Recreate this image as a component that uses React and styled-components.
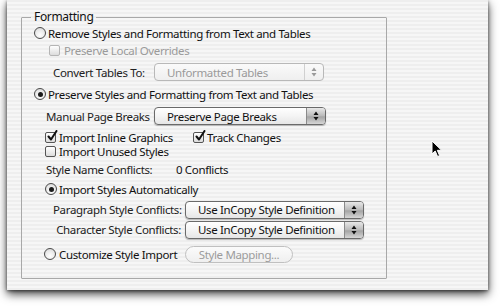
import React from "react"
import styled, { createGlobalStyle } from "styled-components"

const GlobalStyle = createGlobalStyle`
  html, body {
    margin: 0;
    padding: 0;
    background: #ffffff;
    overflow: hidden;
  }
  body {
    font-family: "Noto Sans", "DejaVu Sans", "Liberation Sans", sans-serif;
    font-size: 11.5px;
    letter-spacing: -0.35px;
    color: #111;
  }
`

const Stage = styled.div`
  position: relative;
  width: 500px;
  height: 306px;
  overflow: hidden;
`

const Window = styled.div`
  margin-left: 7px;
  width: 481px;
  height: 290px;
  padding: 10px 0 0 14px;
  box-sizing: border-box;
  background: repeating-linear-gradient(
    to bottom,
    #eeeeee 0px,
    #eeeeee 2px,
    #f6f6f6 2px,
    #f6f6f6 4px
  );
  box-shadow: 0 4px 9px rgba(0, 0, 0, 0.75), 0 1px 3px rgba(0, 0, 0, 0.5);
`

const Group = styled.fieldset`
  margin: 0;
  width: 366px;
  height: 269px;
  box-sizing: border-box;
  padding: 0 0 0 12px;
  border: 1px solid #a8a8a8;
  border-radius: 1px;
  min-width: 0;
`

const Legend = styled.legend`
  margin-left: -3px;
  padding: 0 3px;
  height: 14px;
  line-height: 14px;
  font-size: 12px;
`

const Row = styled.div`
  display: flex;
  align-items: center;
  height: ${p => p.$h || 16}px;
  margin-top: ${p => p.$mt || 0}px;
  padding-left: ${p => p.$indent || 0}px;
  white-space: nowrap;
`

const Item = styled.span`
  display: flex;
  align-items: center;
  width: ${p => (p.$w ? `${p.$w}px` : "auto")};
`

const Text = styled.span`
  color: ${p => (p.$disabled ? "#9a9a9a" : "#111")};
  margin-left: ${p => p.$ml || 0}px;
`

const Label = styled.span`
  display: inline-block;
  width: ${p => p.$w}px;
  text-align: ${p => p.$align || "left"};
  color: #222;
`

const RadioCircle = styled.span`
  display: inline-flex;
  align-items: center;
  justify-content: center;
  width: 12px;
  height: 12px;
  box-sizing: border-box;
  border-radius: 50%;
  border: 1px solid #4a4a4a;
  background: radial-gradient(circle at 50% 70%, #ffffff 0%, #e8e8e8 60%, #cfcfcf 100%);
  flex-shrink: 0;

  &::after {
    content: "";
    width: 5px;
    height: 5px;
    border-radius: 50%;
    background: #1a1a1a;
    display: ${p => (p.$on ? "block" : "none")};
  }
`

const Box = styled.span`
  display: inline-flex;
  align-items: center;
  justify-content: center;
  width: 11px;
  height: 11px;
  box-sizing: border-box;
  border-radius: 2px;
  border: 1px solid ${p => (p.$disabled ? "#b5b5b5" : "#555")};
  background: linear-gradient(to bottom, #ffffff, #dcdcdc);
  flex-shrink: 0;
  position: relative;
`

const Popup = styled.div`
  display: flex;
  align-items: stretch;
  width: ${p => p.$w}px;
  height: ${p => p.$h || 18}px;
  box-sizing: border-box;
  margin-left: ${p => p.$ml || 0}px;
  border: 1px solid ${p => (p.$disabled ? "#b8b8b8" : "#6a6a6a")};
  border-radius: 4px;
  overflow: hidden;
  background: ${p =>
    p.$disabled
      ? "linear-gradient(to bottom, #fafafa, #efefef)"
      : "linear-gradient(to bottom, #ffffff 0%, #f4f4f4 50%, #e6e6e6 100%)"};
  box-shadow: ${p => (p.$disabled ? "none" : "0 1px 1px rgba(0,0,0,0.25)")};
`

const PopupText = styled.span`
  flex: 1;
  display: flex;
  align-items: center;
  padding-left: 12px;
  color: ${p => (p.$disabled ? "#9a9a9a" : "#111")};
`

const Arrows = styled.span`
  width: 18px;
  display: flex;
  align-items: center;
  justify-content: center;
  border-left: 1px solid ${p => (p.$disabled ? "#d0d0d0" : "#8a8a8a")};
  background: ${p =>
    p.$disabled
      ? "transparent"
      : "linear-gradient(to bottom, #e8e8e8 0%, #b9b9b9 50%, #a4a4a4 55%, #d6d6d6 100%)"};
`

const PillButton = styled.div`
  display: flex;
  align-items: center;
  justify-content: center;
  width: 108px;
  height: 17px;
  box-sizing: border-box;
  border: 1px solid #c0c0c0;
  border-radius: 9px;
  background: linear-gradient(to bottom, #fbfbfb, #efefef);
  color: #9c9c9c;
`

const Pointer = styled.svg`
  position: absolute;
  left: 431px;
  top: 140px;
`

const Radio = ({ on }) => <RadioCircle $on={on} />

const Check = ({ on, disabled }) => (
  <Box $disabled={disabled}>
    {on && (
      <svg width="11" height="12" viewBox="0 0 11 12" style={{ position: "absolute", left: 1, top: -3 }}>
        <path d="M1.5 6.5 L4 9.5 L9.5 1" fill="none" stroke="#111" strokeWidth="2" strokeLinecap="round" strokeLinejoin="round" />
      </svg>
    )}
  </Box>
)

const ArrowIcon = ({ disabled }) => (
  <svg width="6" height="10" viewBox="0 0 6 10">
    <path d="M3 0.5 L5.5 4 L0.5 4 Z M3 9.5 L5.5 6 L0.5 6 Z" fill={disabled ? "#9a9a9a" : "#111"} />
  </svg>
)

const Select = ({ w, h, ml, disabled, children }) => (
  <Popup $w={w} $h={h} $ml={ml} $disabled={disabled}>
    <PopupText $disabled={disabled}>{children}</PopupText>
    <Arrows $disabled={disabled}>
      <ArrowIcon disabled={disabled} />
    </Arrows>
  </Popup>
)

const App = () => (
  <Stage>
    <GlobalStyle />
    <Window>
      <Group>
        <Legend>Formatting</Legend>
        <Row $h={18}>
          <Radio />
          <Text $ml={2}>Remove Styles and Formatting from Text and Tables</Text>
        </Row>
        <Row $h={14} $mt={1} $indent={15}>
          <Check disabled />
          <Text $ml={4} $disabled>Preserve Local Overrides</Text>
        </Row>
        <Row $h={20} $mt={5} $indent={19}>
          <Label $w={101}>Convert Tables To:</Label>
          <Select w={170} disabled>Unformatted Tables</Select>
        </Row>
        <Row $h={16} $mt={4}>
          <Radio on />
          <Text $ml={2}>Preserve Styles and Formatting from Text and Tables</Text>
        </Row>
        <Row $h={20} $mt={4} $indent={12}>
          <Label $w={108}>Manual Page Breaks</Label>
          <Select w={172}>Preserve Page Breaks</Select>
        </Row>
        <Row $h={14} $mt={4} $indent={11}>
          <Item $w={148}>
            <Check on />
            <Text $ml={3}>Import Inline Graphics</Text>
          </Item>
          <Item>
            <Check on />
            <Text $ml={3}>Track Changes</Text>
          </Item>
        </Row>
        <Row $h={14} $indent={11}>
          <Check />
          <Text $ml={3}>Import Unused Styles</Text>
        </Row>
        <Row $h={14} $mt={4} $indent={12}>
          <Label $w={130}>Style Name Conflicts:</Label>
          <Text>0 Conflicts</Text>
        </Row>
        <Row $h={16} $mt={5} $indent={11}>
          <Radio on />
          <Text $ml={2}>Import Styles Automatically</Text>
        </Row>
        <Row $h={19} $mt={3} $indent={19}>
          <Label $w={128} $align="right">Paragraph Style Conflicts:</Label>
          <Select w={179} ml={4}>Use InCopy Style Definition</Select>
        </Row>
        <Row $h={19} $mt={1} $indent={19}>
          <Label $w={128} $align="right">Character Style Conflicts:</Label>
          <Select w={179} ml={4}>Use InCopy Style Definition</Select>
        </Row>
        <Row $h={18} $mt={6} $indent={10}>
          <Item $w={141}>
            <Radio />
            <Text $ml={3}>Customize Style Import</Text>
          </Item>
          <PillButton>Style Mapping...</PillButton>
        </Row>
      </Group>
    </Window>
    <Pointer width="12" height="18" viewBox="0 0 12 18">
      <path d="M1 1 L1 14 L4.2 11 L6.6 16.5 L8.6 15.6 L6.3 10.3 L10.6 10.3 Z" fill="#000" stroke="#fff" strokeWidth="1" />
    </Pointer>
  </Stage>
)

export default App
